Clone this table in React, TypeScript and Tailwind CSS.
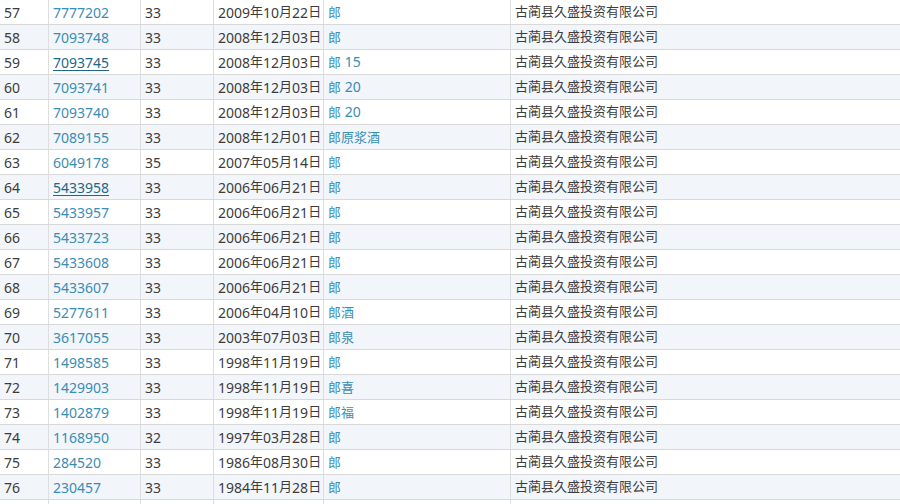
const rows: [number, string, string, string, string, boolean?][] = [
  [57, "7777202", "33", "2009年10月22日", "郎"],
  [58, "7093748", "33", "2008年12月03日", "郎"],
  [59, "7093745", "33", "2008年12月03日", "郎 15", true],
  [60, "7093741", "33", "2008年12月03日", "郎 20"],
  [61, "7093740", "33", "2008年12月03日", "郎 20"],
  [62, "7089155", "33", "2008年12月01日", "郎原浆酒"],
  [63, "6049178", "35", "2007年05月14日", "郎"],
  [64, "5433958", "33", "2006年06月21日", "郎", true],
  [65, "5433957", "33", "2006年06月21日", "郎"],
  [66, "5433723", "33", "2006年06月21日", "郎"],
  [67, "5433608", "33", "2006年06月21日", "郎"],
  [68, "5433607", "33", "2006年06月21日", "郎"],
  [69, "5277611", "33", "2006年04月10日", "郎酒"],
  [70, "3617055", "33", "2003年07月03日", "郎泉"],
  [71, "1498585", "33", "1998年11月19日", "郎"],
  [72, "1429903", "33", "1998年11月19日", "郎喜"],
  [73, "1402879", "33", "1998年11月19日", "郎福"],
  [74, "1168950", "32", "1997年03月28日", "郎"],
  [75, "284520", "33", "1986年08月30日", "郎"],
  [76, "230457", "33", "1984年11月28日", "郎"],
];

const owner = "古蔺县久盛投资有限公司";
const cell = "h-6 pl-[4px] flex items-center whitespace-nowrap border-l border-[#dedede]";

// CJK glyphs in the shot run a touch narrower than the digits, so size them apart
function Mixed({ text }: { text: string }) {
  const parts = text.match(/[\u3400-\u9fff]+|[^\u3400-\u9fff]+/g) ?? [];
  return (
    <>
      {parts.map((p, i) =>
        /[\u3400-\u9fff]/.test(p) ? (
          <span key={i} className="text-[13px]">
            {p}
          </span>
        ) : (
          <span key={i}>{p}</span>
        )
      )}
    </>
  );
}

export default function App() {
  return (
    <div
      className="w-[900px] h-[504px] overflow-hidden bg-white text-[14px] text-[#3c3c3c]"
      style={{ fontFamily: '"Noto Sans", "Noto Sans CJK SC", sans-serif' }}
    >
      {rows.map(([n, reg, cls, date, mark, visited], i) => (
        <div
          key={n}
          className={`grid grid-cols-[48px_92px_73px_110px_187px_1fr] border-b border-[#d9d9d9] ${
            i % 2 === 1 ? "bg-[#f2f5fa]" : "bg-white"
          }`}
        >
          <div className="h-6 pl-[4px] flex items-center">{n}</div>
          <div className={cell}>
            <a
              className={
                visited
                  ? "text-[#1f6784] underline underline-offset-2"
                  : "text-[#3a8db3]"
              }
            >
              {reg}
            </a>
          </div>
          <div className={cell}>{cls}</div>
          <div className={cell}>
            <Mixed text={date} />
          </div>
          <div className={cell}>
            <a className="text-[#3a8db3]">
              <Mixed text={mark} />
            </a>
          </div>
          <div className={cell}>
            <span className="text-[13px]">{owner}</span>
          </div>
        </div>
      ))}
      <div className="grid grid-cols-[48px_92px_73px_110px_187px_1fr] bg-white">
        <div className="h-6" />
        <div className={cell} />
        <div className={cell} />
        <div className={cell} />
        <div className={cell} />
        <div className={cell} />
      </div>
    </div>
  );
}
